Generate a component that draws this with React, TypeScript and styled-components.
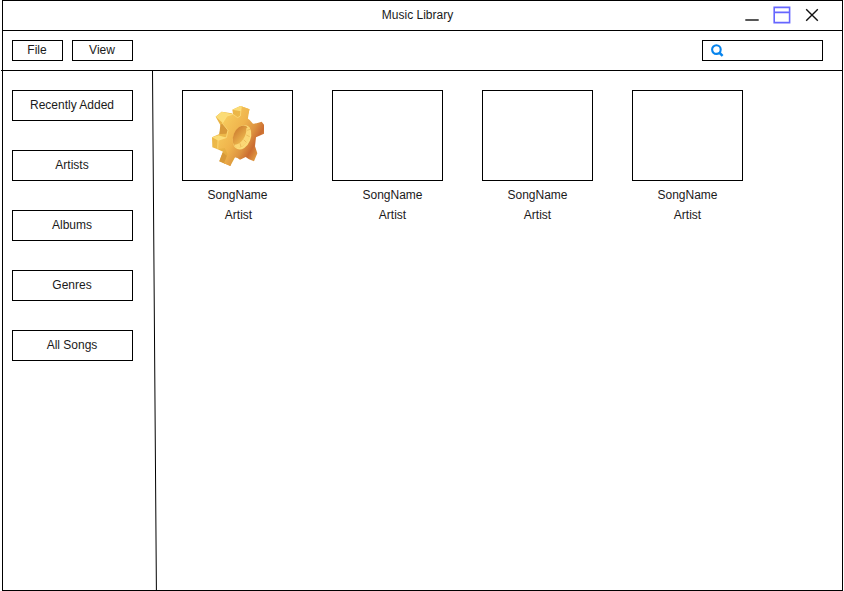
import React from "react";
import styled, { createGlobalStyle } from "styled-components";

const GlobalStyle = createGlobalStyle`
  *, *::before, *::after { box-sizing: border-box; }
  body { margin: 0; background: #fff; overflow: hidden; }
  button, input { font: inherit; color: inherit; background: none; border-radius: 0; }
`;

const AppWindow = styled.div`
  display: grid;
  grid-template-rows: 30px 40px 1fr;
  width: 841px;
  height: 591px;
  margin-left: 2px;
  border: 1px solid #000;
  background: #fff;
  color: #1a1a1a;
  font: 12px/14px "Liberation Sans", Arial, sans-serif;
`;

const TitleBar = styled.header`
  display: grid;
  grid-template-columns: 1fr auto 1fr;
  border-bottom: 1px solid #000;
`;

const Title = styled.h1`
  grid-column: 2;
  margin: 0;
  padding: 7px 10px 0 0;
  font-size: 12px;
  font-weight: normal;
`;

const WindowControls = styled.div`
  display: flex;
  justify-content: flex-end;
  padding: 4px 20px 0 0;
  gap: 10px;
  svg { display: block; }
`;

const Toolbar = styled.nav`
  display: flex;
  align-items: flex-start;
  gap: 9px;
  margin-left: -2px;
  padding: 9px 19px 0 11px;
  border-bottom: 1px solid #000;
`;

const BoxButton = styled.button<{ $width: number; $height: number }>`
  display: flex;
  align-items: center;
  justify-content: center;
  flex: none;
  width: ${(p) => p.$width}px;
  height: ${(p) => p.$height}px;
  padding: 0 1px 2px 0;
  border: 1px solid #000;
`;

const SearchBox = styled.label`
  display: flex;
  align-items: center;
  width: 121px;
  height: 21px;
  margin-left: auto;
  padding-left: 8px;
  border: 1px solid #000;
  svg { flex: none; }
`;

const SearchInput = styled.input`
  width: 90px;
  height: 17px;
  border: 0;
  outline: 0;
`;

const Body = styled.div`
  display: grid;
  grid-template-columns: 149px 5px 1fr;
  min-height: 0;
`;

const Sidebar = styled.aside`
  display: flex;
  flex-direction: column;
  gap: 29px;
  padding: 19px 0 0 9px;
`;

const Divider = styled.svg`
  display: block;
  width: 5px;
  height: 519px;
`;

const SongGrid = styled.main`
  display: flex;
  align-items: flex-start;
  gap: 39px;
  padding: 19px 0 0 25px;
`;

const SongCard = styled.article`
  width: 111px;
`;

const Cover = styled.div`
  display: flex;
  align-items: center;
  justify-content: center;
  height: 91px;
  border: 1px solid #000;
`;

const Caption = styled.p<{ $shift: number }>`
  margin: 0;
  padding-top: 6px;
  text-align: center;
  transform: translateX(${(p) => p.$shift}px);
  &:first-of-type { padding-top: 7px; }
`;

const Gear = () => (
  <svg width="66" height="74" viewBox="0 0 198 222" aria-hidden="true">
    <defs>
      <linearGradient id="face" gradientUnits="userSpaceOnUse" x1="50" y1="75" x2="172" y2="145">
        <stop offset="0" stopColor="#f6c95b" />
        <stop offset="0.4" stopColor="#efb34c" />
        <stop offset="0.65" stopColor="#dd9340" />
        <stop offset="0.82" stopColor="#cb6c31" />
        <stop offset="1" stopColor="#e09b43" />
      </linearGradient>
      <linearGradient id="side" x1="0" y1="0" x2="0.7" y2="1">
        <stop offset="0" stopColor="#e5ad42" />
        <stop offset="0.5" stopColor="#edb94a" />
        <stop offset="1" stopColor="#d99a37" />
      </linearGradient>
      <linearGradient id="bore" x1="0" y1="0.2" x2="1" y2="0.8">
        <stop offset="0" stopColor="#cd7d30" />
        <stop offset="0.6" stopColor="#e7ac48" />
        <stop offset="1" stopColor="#f5ce60" />
      </linearGradient>
    </defs>
    <path fill="url(#side)" d="M84 45L82 32L106 21L133 31L110 180L90 175L76 201L43 187L54 158L38 151L22 145L21 115L43 105L48 82L32 53L50 38L80 43Z" />
    <path fill="#fbdc76" d="M32 53L50 38L84 46L64 56L54 73ZM82 32L106 21L133 31L108 37ZM21 115L40 109L65 116L40 125Z" />
    <path fill="#d89939" d="M46 78L54 73L70 86L64 104L43 105ZM53 160L43 187L60 194L66 171Z" />
    <path fill="url(#face)" d="M109 22L134 31L126 57L134 63L144 74L155 73L170 68L177 77L177 104L153 115L150 142L157 163L147 187L132 181L122 174L105 182L93 174L82 178L76 201L57 193L68 166L59 147L38 151L39 124L64 116L69 94L52 73L66 51L84 46L98 56L106 51Z" />
    <path fill="none" stroke="#ffe184" strokeWidth="2" d="M38 149L39 124L64 116L69 94L52 73L66 51L84 46L98 56L106 51L109 22" />
    <ellipse cx="111" cy="115" rx="26" ry="38" transform="rotate(22 111 115)" fill="#fbdc7a" />
    <ellipse cx="108" cy="113" rx="23" ry="35" transform="rotate(22 108 113)" fill="url(#bore)" />
    <path fill="#fbd775" d="M132 83C144 107 128 141 96 148C92 145 89 141 88 137C108 138 126 112 124 88Z" />
    <path fill="none" stroke="#dba141" strokeWidth="1.5" d="M126 94L136 91M124 108L134 113M116 122L124 130M105 133L108 144" />
  </svg>
);

const songs = [
  { id: 1, hasIcon: true, nameShift: 0, artistShift: 1 },
  { id: 2, hasIcon: false, nameShift: 5, artistShift: 5 },
  { id: 3, hasIcon: false, nameShift: 0, artistShift: 0 },
  { id: 4, hasIcon: false, nameShift: 0, artistShift: 0 },
];

export default function App() {
  return (
    <>
      <GlobalStyle />
      <AppWindow>
        <TitleBar>
          <Title>Music Library</Title>
          <WindowControls>
            <svg width="20" height="20" viewBox="0 0 20 20"><path d="M3.3 15H16.7" stroke="#444" strokeWidth="1.8" /></svg>
            <svg width="20" height="20" viewBox="0 0 20 20"><path d="M2.2 2.4h15.4v15.2H2.2zM2.2 7.4h15.4" fill="none" stroke="#6666ff" strokeWidth="1.6" /></svg>
            <svg width="20" height="20" viewBox="0 0 20 20"><path d="M4.2 4.2L15.8 15.8M15.8 4.2L4.2 15.8" fill="none" stroke="#111" strokeWidth="1.4" /></svg>
          </WindowControls>
        </TitleBar>
        <Toolbar>
          <BoxButton $width={51} $height={21}>File</BoxButton>
          <BoxButton $width={61} $height={21}>View</BoxButton>
          <SearchBox>
            <svg width="13" height="13" viewBox="0 0 13 13" fill="none" stroke="#0784ed">
              <circle cx="5.4" cy="5.6" r="4.3" strokeWidth="2.1" />
              <path d="M8.2 8.5L11.6 11.8" strokeWidth="2.5" />
            </svg>
            <SearchInput aria-label="Search" />
          </SearchBox>
        </Toolbar>
        <Body>
          <Sidebar>
            {["Recently Added", "Artists", "Albums", "Genres", "All Songs"].map((label) => (
              <BoxButton key={label} $width={121} $height={31}>{label}</BoxButton>
            ))}
          </Sidebar>
          <Divider viewBox="0 0 5 519">
            <path d="M0.5 0L4.4 519" stroke="#000" />
          </Divider>
          <SongGrid>
            {songs.map((song) => (
              <SongCard key={song.id}>
                <Cover>{song.hasIcon && <Gear />}</Cover>
                <Caption $shift={song.nameShift}>SongName</Caption>
                <Caption $shift={song.artistShift}>Artist</Caption>
              </SongCard>
            ))}
          </SongGrid>
        </Body>
      </AppWindow>
    </>
  );
}
